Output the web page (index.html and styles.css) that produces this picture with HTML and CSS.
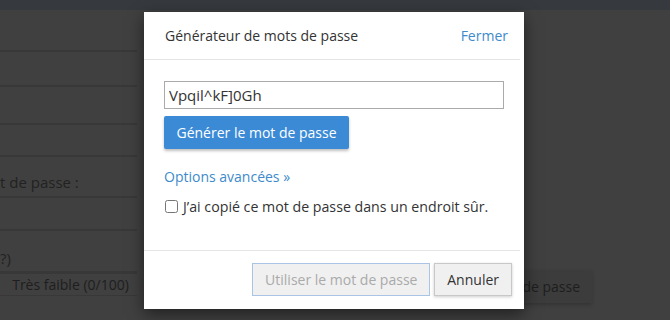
FILE: index.html
```html
<!DOCTYPE html>
<html lang="fr">
<head>
    <meta charset="UTF-8">
    <meta name="viewport" content="width=device-width, initial-scale=1.0">
    <title>Générateur de mots de passe</title>
    <link rel="stylesheet" href="styles.css">
</head>
<body>
    <div class="topbar"></div>
    <div class="page">
        <div class="fields">
            <div class="row r1"></div>
            <div class="row r2"></div>
            <div class="row r3"></div>
            <div class="row r4"></div>
            <div class="row r5"><span class="label">t de passe :</span></div>
            <div class="row r6"></div>
            <div class="row r7"><span class="label">?)</span></div>
            <div class="row meter">Très faible (0/100)</div>
        </div>
        <div class="side">
            <div class="ghost-btn">de passe</div>
        </div>
    </div>

    <div class="modal">
        <div class="modal-head">
            <div class="modal-title">Générateur de mots de passe</div>
            <a class="close" href="#">Fermer</a>
        </div>
        <div class="modal-body">
            <input type="text" class="pw" value="Vpqil^kF]0Gh">
            <button class="btn-primary">Générer le mot de passe</button>
            <a class="advanced" href="#">Options avancées »</a>
            <label class="check"><input type="checkbox"> J’ai copié ce mot de passe dans un endroit sûr.</label>
        </div>
        <div class="modal-foot">
            <button class="btn btn-use" disabled>Utiliser le mot de passe</button>
            <button class="btn">Annuler</button>
        </div>
    </div>
</body>
</html>
```

FILE: styles.css
```css
body {
    margin: 0px;
    font-family: "Open Sans", "Liberation Sans", sans-serif;
    background-color: #404040;
    color: #222;
    overflow: hidden;
    height: 320px;
}

.topbar {
    height: 10px;
    background-color: #363a3e;
}

.page {
    display: grid;
    grid-template-columns: 137px 1fr;
}

.row {
    box-sizing: border-box;
    border-bottom: 2px solid #383838;
    font-size: 15px;
    display: flex;
    align-items: flex-end;
    overflow: hidden;
    white-space: nowrap;
}

.r1 { height: 42px; }
.r2 { height: 35px; }
.r3 { height: 38px; }
.r4 { height: 32px; }
.r5 { height: 41px; padding-bottom: 4px; }
.r6 { height: 33px; }
.r7 { height: 42px; padding-bottom: 3px; }

.meter {
    height: 23px;
    border-top: 1px solid #383838;
    border-bottom: 1px solid #383838;
    justify-content: center;
    align-items: center;
    color: #1e1e1e;
    font-size: 14px;
    padding-left: 4px;
}

.side {
    display: flex;
    flex-direction: column;
    align-items: flex-end;
    padding-right: 78px;
    padding-top: 260px;
}

.ghost-btn {
    height: 33px;
    line-height: 33px;
    width: 60px;
    padding-right: 12px;
    text-align: right;
    background-color: #3c3c3c;
    box-shadow: 0 2px 4px rgba(0, 0, 0, 0.2);
    font-size: 14px;
    color: #1e1e1e;
    white-space: nowrap;
}

/* the dialog sits over the dimmed page */
.modal {
    position: absolute;
    left: 144px;
    top: 12px;
    width: 380px;
    height: 297px;
    box-sizing: border-box;
    padding-right: 4px;
    background-color: white;
    box-shadow: 0 5px 15px rgba(0, 0, 0, 0.5);
    display: flex;
    flex-direction: column;
}

.modal-head {
    height: 48px;
    box-sizing: border-box;
    border-bottom: 1px solid #e5e5e5;
    display: flex;
    align-items: center;
    justify-content: space-between;
    padding: 0px 12px 0px 21px;
}

.modal-title {
    font-size: 14px;
    color: #333;
}

.close {
    font-size: 14px;
    color: #3d8bcb;
    text-decoration: none;
}

.modal-body {
    flex: 1;
    display: flex;
    flex-direction: column;
    align-items: flex-start;
    padding: 21px 16px 0px 20px;
    border-bottom: 1px solid #e5e5e5;
}

.pw {
    box-sizing: border-box;
    width: 340px;
    height: 28px;
    border: 1px solid #aaa;
    padding: 0px 4px;
    font-family: "Open Sans", sans-serif;
    font-size: 15px;
    color: #333;
    margin: 0px;
}

.btn-primary {
    margin-top: 7px;
    width: 185px;
    height: 33px;
    padding: 0px;
    border: none;
    border-radius: 2px;
    background-color: #3a8ad6;
    color: white;
    font-family: "Open Sans", sans-serif;
    font-size: 14px;
    box-shadow: 0 2px 3px rgba(0, 0, 0, 0.25);
}

.advanced {
    margin-top: 18px;
    font-size: 14px;
    color: #3d8bcb;
    text-decoration: none;
}

.check {
    margin-top: 11px;
    font-size: 14.2px;
    color: #333;
    display: flex;
    align-items: center;
    white-space: nowrap;
}

.check input {
    margin: 0px 5px 0px 1px;
    width: 13px;
    height: 13px;
}

.modal-foot {
    height: 58px;
    box-sizing: border-box;
    display: flex;
    justify-content: flex-end;
    align-items: flex-start;
    gap: 4px;
    padding: 12px 8px 0px 0px;
}

.btn {
    height: 33px;
    padding: 0px 12px;
    border: 1px solid #c8c8c8;
    background-color: #f0f0f0;
    color: #333;
    font-family: "Open Sans", sans-serif;
    font-size: 14px;
    white-space: nowrap;
    box-shadow: 0 1px 3px rgba(0, 0, 0, 0.2);
}

.btn-use {
    width: 178px;
    padding: 0px;
    color: #aaa;
    border-color: #a9c4e4;
    box-shadow: none;
}
```
